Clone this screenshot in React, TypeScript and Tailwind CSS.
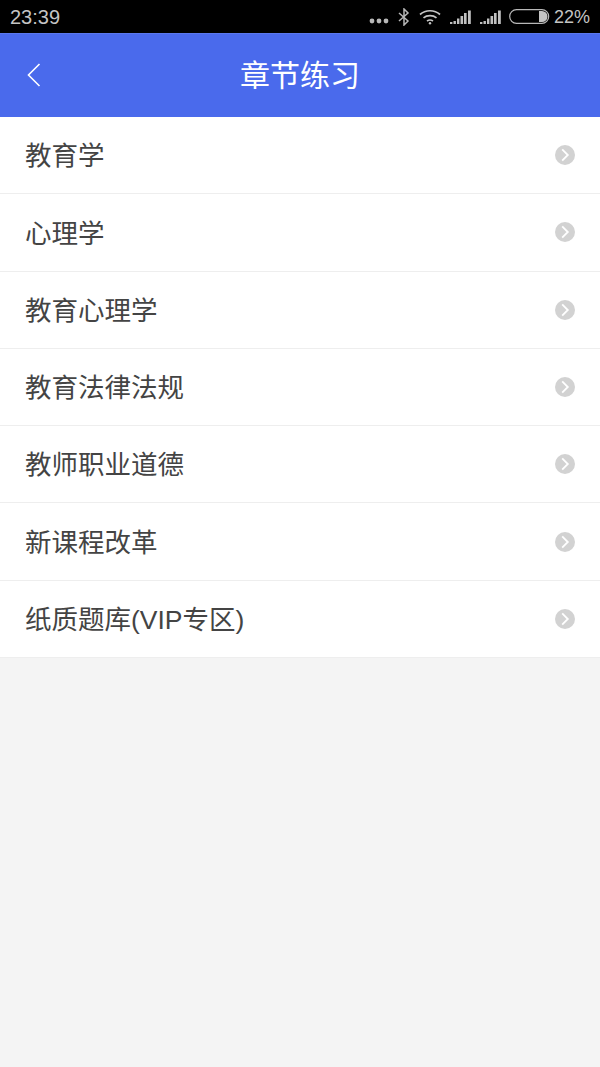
const items = ["教育学", "心理学", "教育心理学", "教育法律法规", "教师职业道德", "新课程改革", "纸质题库(VIP专区)"];

function Chevron() {
  return (
    <svg width="20" height="20" viewBox="0 0 20 20" className="shrink-0">
      <circle cx="10" cy="10" r="10" fill="#d2d2d2" />
      <path d="M7.2 4.4 L12.8 10 L7.2 15.6" fill="none" stroke="#ffffff" strokeWidth="1.8" />
    </svg>
  );
}

function Signal() {
  return (
    <svg width="21" height="14" viewBox="0 0 21 14" fill="#c0c0c0">
      <rect x="0" y="12" width="2.4" height="2" />
      <rect x="3.5" y="11" width="2.4" height="3" />
      <rect x="7" y="8.5" width="2.4" height="5.5" />
      <rect x="10.5" y="6" width="2.6" height="8" />
      <rect x="14" y="3" width="2.6" height="11" />
      <rect x="18" y="0.5" width="2.8" height="13.5" />
    </svg>
  );
}

export default function App() {
  return (
    <div className="w-[600px] h-[1067px] flex flex-col bg-[#f4f4f4] font-['Liberation_Sans','Noto_Sans_CJK_SC',sans-serif]">
      <div className="h-[33px] bg-black flex items-center justify-between pl-[10px] pr-[10px] text-[#c4c4c4] text-[20px]">
        <span>23:39</span>
        <div className="flex items-center">
          <svg width="20" height="6" viewBox="0 0 20 6" fill="#b8b8b8" className="mt-[9px] mr-[8px]">
            <circle cx="3" cy="3" r="2.4" /><circle cx="10" cy="3" r="2.4" /><circle cx="17" cy="3" r="2.4" />
          </svg>
          <svg width="14" height="18" viewBox="0 0 14 18" fill="none" stroke="#b8b8b8" strokeWidth="1.5" className="mr-[8px]">
            <path d="M2 5 L11 13 L7 17 L7 1 L11 5 L2 13" />
          </svg>
          <svg width="22" height="16" viewBox="0 0 22 16" fill="none" stroke="#c4c4c4" strokeWidth="1.7" className="mr-[9px]">
            <path d="M1 5.5 C6.5 0.5 15.5 0.5 21 5.5" />
            <path d="M4.5 8.8 C8 5.8 14 5.8 17.5 8.8" />
            <path d="M8 12 C9.8 10.8 12.2 10.8 14 12" />
            <circle cx="11" cy="14.3" r="1.2" fill="#c4c4c4" stroke="none" />
          </svg>
          <div className="mr-[9px]"><Signal /></div>
          <div className="mr-[8px]"><Signal /></div>
          <svg width="41" height="15" viewBox="0 0 41 15" fill="none" className="mr-[4px]">
            <rect x="0.7" y="0.7" width="39" height="13.6" rx="6.8" stroke="#b8b8b8" strokeWidth="1.2" />
            <path d="M30 2 H33 A5.5 5.5 0 0 1 33 13 H30 Z" fill="#c4c4c4" />
          </svg>
          <span className="text-[18px] pt-[2px]">22%</span>
        </div>
      </div>
      <div className="h-[84px] bg-[#4a6aec] border-t border-[#5a78ee] flex items-center relative justify-center">
        <svg width="16" height="24" viewBox="0 0 16 24" fill="none" stroke="#ffffff" strokeWidth="1.6" className="absolute left-[26px] top-[29px]">
          <path d="M13.5 1 L2.5 12 L13.5 23" />
        </svg>
        <span className="text-white text-[30px]">章节练习</span>
      </div>
      <div className="bg-white">
        {items.map((t) => (
          <div key={t} className="h-[77.3px] flex items-center justify-between pl-[25px] pr-[25px] border-b border-[#eeeeee]">
            <span className="text-[26.5px] text-[#444444] pt-[4px]">{t}</span>
            <Chevron />
          </div>
        ))}
      </div>
    </div>
  );
}
